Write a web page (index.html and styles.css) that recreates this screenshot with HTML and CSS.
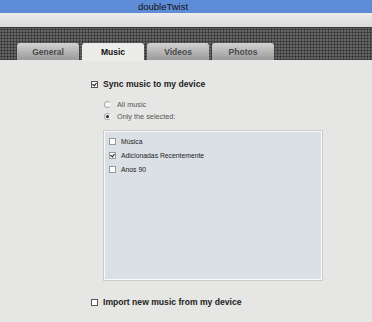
FILE: index.html
```html
<!DOCTYPE html>
<html lang="en">
<head>
  <meta charset="UTF-8">
  <title>doubleTwist</title>
  <link rel="stylesheet" href="styles.css">
</head>
<body>
  <header class="titlebar">doubleTwist</header>
  <div class="toolbar"></div>

  <nav class="tabs">
    <button class="tab">General</button>
    <button class="tab active">Music</button>
    <button class="tab">Videos</button>
    <button class="tab">Photos</button>
  </nav>

  <section class="content">
    <label class="check bold"><span class="box on"></span>Sync music to my device</label>

    <div class="radios">
      <label class="radio"><span class="dot"></span>All music</label>
      <label class="radio"><span class="dot on"></span>Only the selected:</label>
    </div>

    <ul class="playlists">
      <li><span class="box small"></span>Música</li>
      <li><span class="box small on"></span>Adicionadas Recentemente</li>
      <li><span class="box small"></span>Anos 90</li>
    </ul>

    <label class="check bold import"><span class="box"></span>Import new music from my device</label>
  </section>
</body>
</html>
```

FILE: styles.css
```css
body {
  margin: 0;
  font-family: "Liberation Sans", sans-serif;
  background-color: #e6e6e4;
  width: 372px;
  height: 322px;
  overflow: hidden;
}

.titlebar {
  height: 13px;
  background-color: #5f8cd6;
  color: #111;
  font-size: 9.5px;
  line-height: 13px;
  text-align: center;
  padding-right: 46px;
}

.toolbar {
  height: 14px;
  background: linear-gradient(#ececec, #dadada);
  border-bottom: 1px solid #3a3a3a;
}

.tabs {
  display: flex;
  gap: 3px;
  height: 17px;
  padding: 15px 0 0 17px;
  background-color: #626262;
  background-image: radial-gradient(circle, #2e2e2e 0.9px, transparent 1.1px);
  background-size: 3px 3px;
}

.tab {
  width: 62px;
  height: 17px;
  padding: 0;
  border: none;
  border-radius: 3px 3px 0 0;
  background: linear-gradient(#d2d2d2, #9a9a9a);
  color: #4a4a4a;
  font-family: "Liberation Sans", sans-serif;
  font-weight: bold;
  font-size: 8.5px;
}

.tab.active {
  background: #ececea;
  color: #111;
  height: 18px;
}

.content {
  padding: 18px 0 0 91px;
}

label {
  display: flex;
  align-items: center;
  color: #222;
}

.check.bold {
  font-weight: bold;
  font-size: 8.6px;
  height: 12px;
}

.box {
  width: 5px;
  height: 5px;
  border: 1px solid #555;
  background: #fff;
  margin-right: 5px;
  position: relative;
}

.box.on::after {
  content: "";
  position: absolute;
  left: 1px;
  top: 0;
  width: 2px;
  height: 3px;
  border: solid #111;
  border-width: 0 1px 1px 0;
  transform: rotate(40deg);
}

.radios {
  padding: 8px 0 0 13px;
}

.radio {
  font-size: 7.3px;
  color: #555;
  height: 12px;
}

.dot {
  width: 5px;
  height: 5px;
  border-radius: 50%;
  border: 1px solid #aaa;
  border-right-color: #eee;
  background: #f4f4f4;
  margin-right: 6px;
  position: relative;
}

.dot.on::after {
  content: "";
  position: absolute;
  left: 1px;
  top: 1px;
  width: 3px;
  height: 3px;
  border-radius: 50%;
  background: #222;
}

.playlists {
  list-style: none;
  margin: 9px 0 0 13px;
  padding: 2px 0 0 4px;
  width: 212px;
  height: 145px;
  background-color: #dbe0e6;
  border: 1px solid #fafafa;
  box-shadow: 0 0 0 1px #cacaca;
}

.playlists li {
  display: flex;
  align-items: center;
  height: 14px;
  font-size: 6.8px;
  color: #222;
}

.box.small {
  border-color: #999;
  margin-right: 5px;
}

.import {
  margin-top: 16px;
}
```
